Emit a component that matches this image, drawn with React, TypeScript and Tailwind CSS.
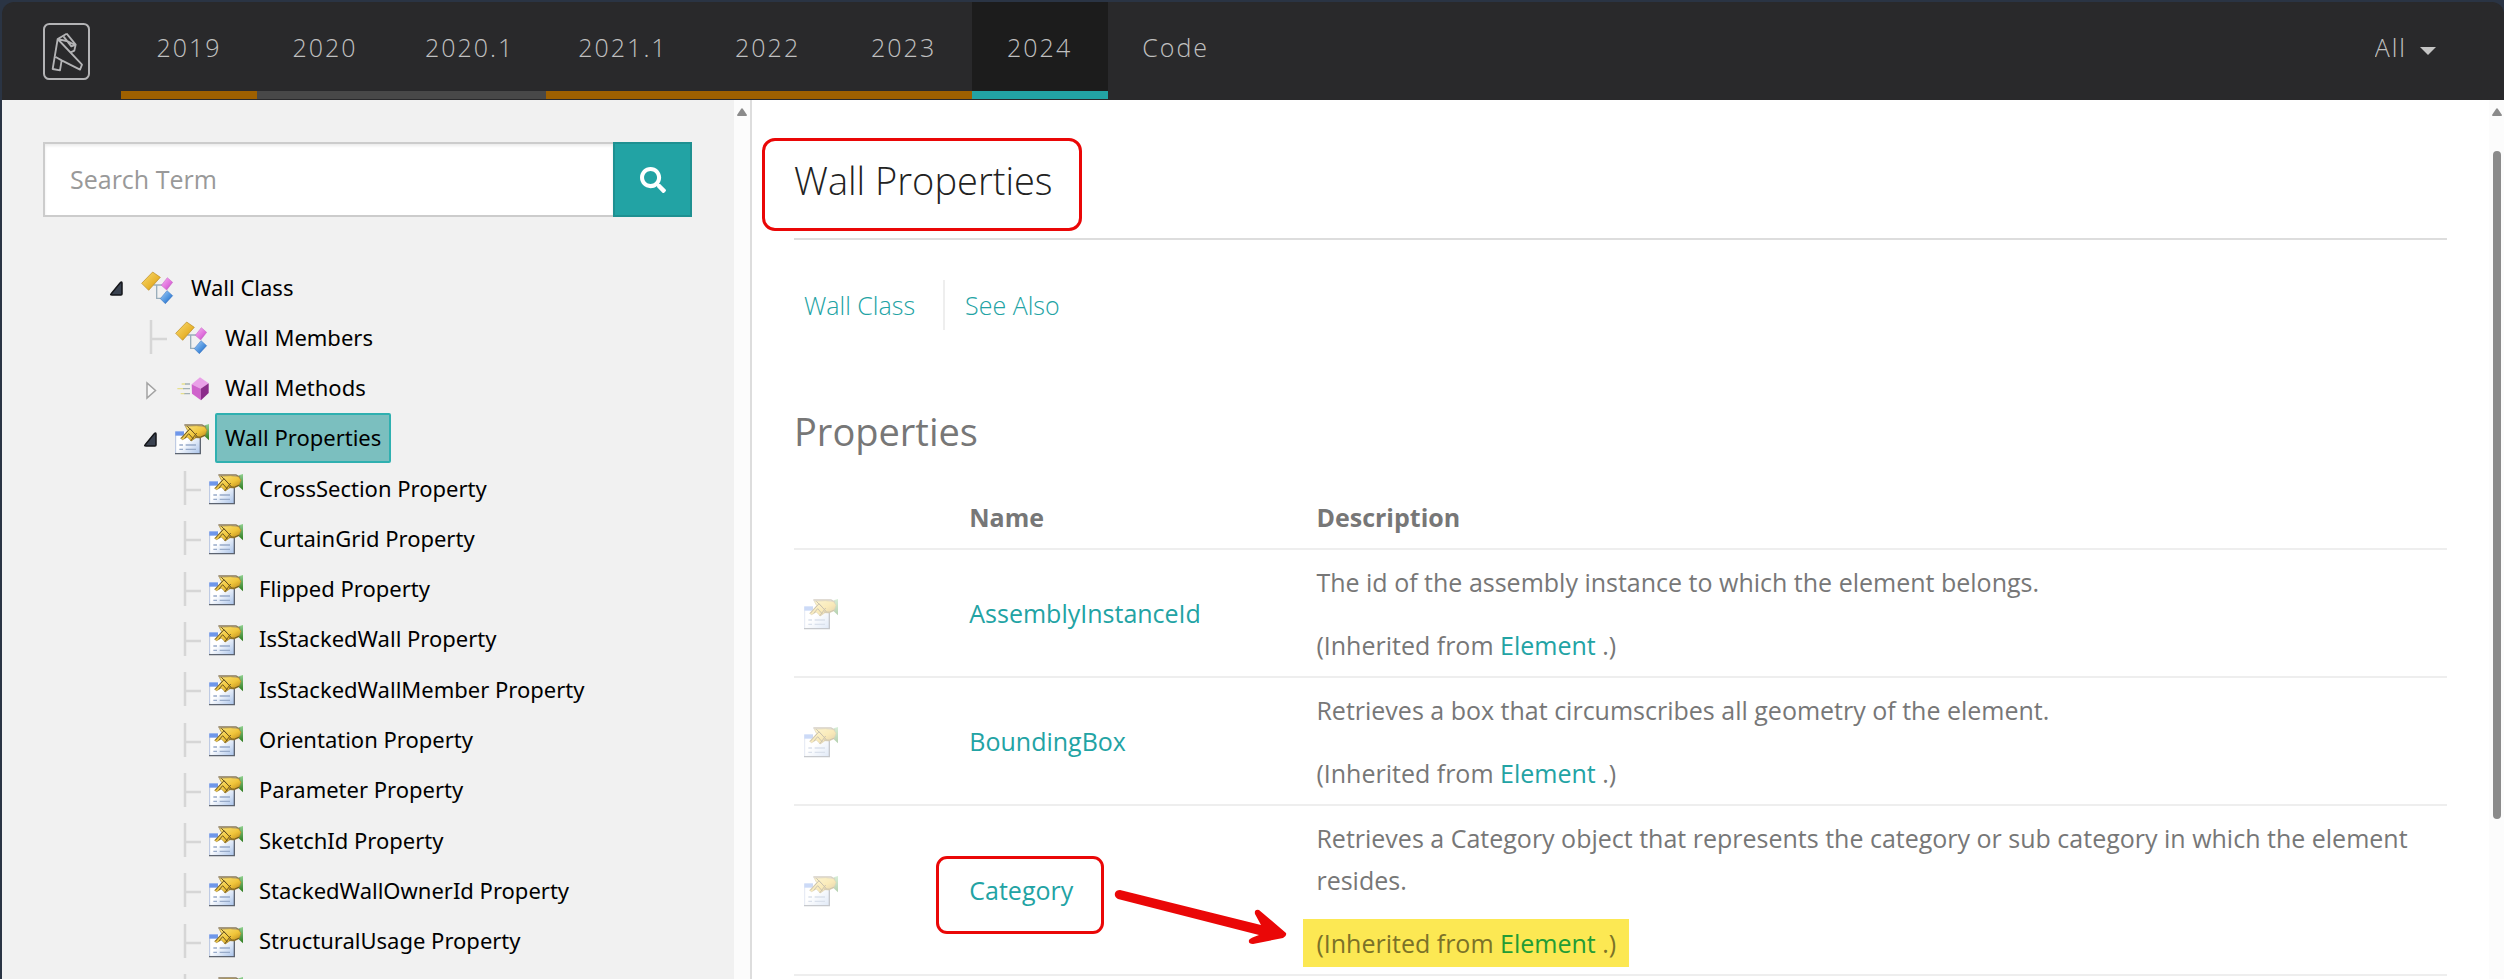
import React from "react";
import { FaSearch } from "react-icons/fa";

type IconKind = "class" | "method" | "property";
type ToggleKind = "open" | "closed" | "leaf";

const versions = [
  { label: "2019", bar: "border-[#9e6000]" },
  { label: "2020", bar: "border-[#484848]" },
  { label: "2020.1", bar: "border-[#484848]" },
  { label: "2021.1", bar: "border-[#9e6000]" },
  { label: "2022", bar: "border-[#9e6000]" },
  { label: "2023", bar: "border-[#9e6000]" },
  { label: "2024", bar: "border-[#22a3a4] bg-[#1c1c1c]" },
  { label: "Code", bar: "border-transparent" },
];

const treeRows: { label: string; level: number; icon: IconKind; toggle: ToggleKind; selected?: boolean }[] = [
  { label: "Wall Class", level: 0, icon: "class", toggle: "open" },
  { label: "Wall Members", level: 1, icon: "class", toggle: "leaf" },
  { label: "Wall Methods", level: 1, icon: "method", toggle: "closed" },
  { label: "Wall Properties", level: 1, icon: "property", toggle: "open", selected: true },
  { label: "CrossSection Property", level: 2, icon: "property", toggle: "leaf" },
  { label: "CurtainGrid Property", level: 2, icon: "property", toggle: "leaf" },
  { label: "Flipped Property", level: 2, icon: "property", toggle: "leaf" },
  { label: "IsStackedWall Property", level: 2, icon: "property", toggle: "leaf" },
  { label: "IsStackedWallMember Property", level: 2, icon: "property", toggle: "leaf" },
  { label: "Orientation Property", level: 2, icon: "property", toggle: "leaf" },
  { label: "Parameter Property", level: 2, icon: "property", toggle: "leaf" },
  { label: "SketchId Property", level: 2, icon: "property", toggle: "leaf" },
  { label: "StackedWallOwnerId Property", level: 2, icon: "property", toggle: "leaf" },
  { label: "StructuralUsage Property", level: 2, icon: "property", toggle: "leaf" },
  { label: "", level: 2, icon: "property", toggle: "leaf" },
];

const indents = ["pl-[107px]", "pl-[141px]", "pl-[175px]"];

const members = [
  { name: "AssemblyInstanceId", text: "The id of the assembly instance to which the element belongs." },
  { name: "BoundingBox", text: "Retrieves a box that circumscribes all geometry of the element." },
  {
    name: "Category",
    text: "Retrieves a Category object that represents the category or sub category in which the element resides.",
    marked: true,
  },
];

function Logo() {
  return (
    <svg className="h-[57px] w-[47px]" viewBox="70 38 141 171" fill="none" stroke="#b3b3b5" strokeLinejoin="round" aria-hidden="true">
      <rect x="73" y="41" width="135" height="165" rx="16" strokeWidth="6" />
      <path
        strokeWidth="5.5"
        d="M141 70 L114 86 L99 176 L121 180 L126 150 L181 178 L187 163 L114 86 M108 140 L126 150 M141 70 L168 103 L164 121 L153 126 M114 86 L144 93 L166 104 M132 79 L155 108 L167 104"
      />
    </svg>
  );
}

function ClassIcon() {
  return (
    <svg className="h-[34px] w-[34px]" viewBox="185 61 102 102" aria-hidden="true">
      <defs>
        <linearGradient id="gold" x1="0" y1="0" x2="1" y2="1">
          <stop offset="0" stopColor="#f9dd75" />
          <stop offset="0.6" stopColor="#e9b52f" />
          <stop offset="1" stopColor="#a97508" />
        </linearGradient>
        <linearGradient id="pink" x1="0" y1="0" x2="1" y2="1">
          <stop offset="0" stopColor="#f6b4f2" />
          <stop offset="0.6" stopColor="#e06fdc" />
          <stop offset="1" stopColor="#a83fa8" />
        </linearGradient>
        <linearGradient id="blue" x1="0" y1="0" x2="1" y2="1">
          <stop offset="0" stopColor="#a9d2fa" />
          <stop offset="0.6" stopColor="#4a90dd" />
          <stop offset="1" stopColor="#1c52a8" />
        </linearGradient>
      </defs>
      <path d="M222 106 H250 M232 106 V146 H248" fill="none" stroke="#9aaebb" strokeWidth="4" />
      <path d="M220 67 L243 83 L208 122 L187 101 Z" fill="url(#gold)" stroke="#b98a1c" strokeWidth="2" />
      <path d="M264 84 L280 98 L262 121 L246 107 Z" fill="url(#pink)" stroke="#c65cc4" strokeWidth="1.5" />
      <path d="M263 123 L280 138 L258 162 L243 147 Z" fill="url(#blue)" stroke="#2f6fc0" strokeWidth="1.5" />
    </svg>
  );
}

function MethodIcon() {
  return (
    <svg className="h-[34px] w-[34px]" viewBox="286 362 102 102" aria-hidden="true">
      <path d="M306 401 H318 M293 415 H312 M303 430 H316" stroke="#e6df8e" strokeWidth="4" />
      <path d="M316 401 H331 M310 415 H331 M314 430 H331" stroke="#a3b0b4" strokeWidth="4" />
      <path d="M361 381 L387 399 L363 415 L336 402 Z" fill="#eaa0e8" />
      <path d="M336 402 L363 415 L364 450 L337 430 Z" fill="#cf62cb" />
      <path d="M387 399 L387 428 L364 450 L363 415 Z" fill="#8b2c8a" />
    </svg>
  );
}

function PropertyIcon() {
  return (
    <svg className="h-[34px] w-[34px] shrink-0" viewBox="285 514 102 102" aria-hidden="true">
      <defs>
        <linearGradient id="sheet" x1="0" y1="0" x2="1" y2="1">
          <stop offset="0.45" stopColor="#ffffff" />
          <stop offset="1" stopColor="#a9c3ea" />
        </linearGradient>
        <linearGradient id="hand" x1="0" y1="0" x2="1" y2="1">
          <stop offset="0" stopColor="#fbe98a" />
          <stop offset="0.55" stopColor="#f0c53a" />
          <stop offset="1" stopColor="#a87510" />
        </linearGradient>
        <linearGradient id="sleeve" x1="0" y1="0" x2="0" y2="1">
          <stop offset="0" stopColor="#8fd08f" />
          <stop offset="1" stopColor="#2c7a1c" />
        </linearGradient>
      </defs>
      <rect x="286" y="546" width="74" height="65" fill="url(#sheet)" />
      <path d="M287 546 V611" stroke="#b4c2de" strokeWidth="3" />
      <path d="M285 612 H361 V560" fill="none" stroke="#5d6470" strokeWidth="4" />
      <rect x="286" y="545" width="26" height="13" fill="#6f97ea" />
      <path d="M298 586 H309 M298 599 H309 M317 586 H348 M317 599 H348" stroke="#98abc9" strokeWidth="4" />
      <path d="M374 527 L387 523 V572 L374 560 Z" fill="url(#sleeve)" />
      <path d="M313 526 H366 L378 533" fill="none" stroke="#8a7b5c" strokeWidth="4" />
      <path
        d="M302 566 L323 543 L316 530 L350 528 L374 531 L381 542 L375 558 L360 565 L348 564 L334 574 L322 562 L308 570 Z"
        fill="url(#hand)"
        stroke="#a68a3a"
        strokeWidth="2"
      />
      <path d="M304 566 L330 537 L352 561 M314 566 L326 552 L340 568 M322 530 L340 548 M332 574 L350 550 M345 562 Q362 566 376 556" fill="none" stroke="#6b5420" strokeWidth="3" />
    </svg>
  );
}

function Toggle({ kind }: { kind: ToggleKind }) {
  return (
    <svg className="h-[34px] w-[32px] shrink-0" viewBox="0 0 32 34" aria-hidden="true">
      {kind === "open" && <path d="M13 13 V24 Q13 25 12 25 H3 Q1 25 2 24 L11 13 Q13 11 13 13 Z" fill="#3a4250" stroke="#15161a" strokeWidth="1.5" />}
      {kind === "closed" && <path d="M4 12 V27 L12.500 19.500 Z" fill="#f8f8f8" stroke="#a3a3a3" strokeWidth="1.500" />}
      {kind === "leaf" && <path d="M8 0 V34 M8 19 H24" fill="none" stroke="#d6d6d6" strokeWidth="2.500" />}
    </svg>
  );
}

function ScrollArrow() {
  return (
    <svg className="mt-2 h-2 w-2.5" viewBox="0 0 10 8" aria-hidden="true">
      <path d="M4.200 0.700 Q5 0 5.800 0.700 L10 7 Q10 8 9 8 H1 Q0 8 0 7 Z" fill="#8b8b8b" />
    </svg>
  );
}

function Annotation() {
  return (
    <>
      <span className="pointer-events-none absolute -top-[13px] -right-[31px] -bottom-[23px] -left-[33px] rounded-[11px] border-3 border-[#ea0707]" />
      <svg className="pointer-events-none absolute top-[36px] left-[144px] h-[44px] w-[176px]" viewBox="1114 905 176 44" overflow="visible" aria-hidden="true">
        <path
          d="M1121 890 L1262 925 L1256 914 Q1255 909 1260 910 L1287 933 Q1288 936 1284 938 L1254 944 Q1249 944 1250 940 Q1251 938 1260 935 L1119 899 Q1115 897 1116 893 Q1117 890 1121 890 Z"
          fill="#ea0707"
        />
      </svg>
    </>
  );
}

export default function App() {
  return (
    <div className="h-screen overflow-hidden bg-[#2a3444] pt-0.5 pl-0.5 font-['Open_Sans',sans-serif]">
      <div className="flex h-full flex-col">
        <header className="flex h-[98px] shrink-0 items-stretch rounded-t-xl bg-[#29292b] pb-px pl-[41px] text-[25px] font-light tracking-[2px] text-[#c0c0c0]">
          <a href="#home" aria-label="Home" className="mt-[21px] mr-[31px]">
            <Logo />
          </a>
          <nav className="flex">
            {versions.map((v) => (
              <a
                key={v.label}
                href={"#" + v.label}
                className={"flex min-w-[136px] items-center justify-center border-b-8 px-8 " + v.bar}
              >
                <span className="leading-[34px]">{v.label}</span>
              </a>
            ))}
          </nav>
          <label className="mr-[68px] ml-auto flex items-center gap-[13px] pb-2">
            <select aria-label="Scope" className="appearance-none bg-transparent leading-[34px] tracking-[2px] outline-none [field-sizing:content]">
              <option>All</option>
            </select>
            <svg className="mt-2 h-2 w-4" viewBox="0 0 16 8" aria-hidden="true">
              <path d="M0 0 H16 L8 8 Z" fill="#c4c4c4" />
            </svg>
          </label>
        </header>

        <div className="flex min-h-0 flex-1">
          <aside className="flex w-[750px] shrink-0 border-r-2 border-[#dddddd] bg-[#f1f1f1]">
            <div className="min-w-0 flex-1 overflow-hidden">
              <form className="mt-[42px] mr-[42px] ml-[41px] flex h-[75px]" onSubmit={(e) => e.preventDefault()}>
                <input
                  type="text"
                  aria-label="Search Term"
                  placeholder="Search Term"
                  className="min-w-0 flex-1 border-2 border-r-0 border-[#cccccc] bg-white px-[25px] text-[25px] shadow-[inset_0_2px_3px_rgba(0,0,0,0.08)] outline-none placeholder:text-[#999999]"
                />
                <button type="submit" aria-label="Search" className="flex w-[79px] items-center justify-center border-2 border-[#1e9091] bg-[#22a3a4] text-white">
                  <FaSearch className="h-[26px] w-[26px]" />
                </button>
              </form>
              <ul className="mt-[45px] grid h-[754px] auto-rows-fr font-['Noto_Sans',sans-serif] text-[22px] text-black">
                {treeRows.map((row, index) => (
                  <li key={index} className={"flex items-center " + indents[row.level]}>
                    <Toggle kind={row.toggle} />
                    {row.icon === "class" && <ClassIcon />}
                    {row.icon === "method" && <MethodIcon />}
                    {row.icon === "property" && <PropertyIcon />}
                    {row.label && (
                      <a
                        href={"#" + row.label}
                        className={
                          "ml-1.5 flex h-full items-center rounded-xs border-2 px-2 whitespace-nowrap " +
                          (row.selected ? "border-[#2fb0b0] bg-[#7bbfbf]" : "border-transparent")
                        }
                      >
                        {row.label}
                      </a>
                    )}
                  </li>
                ))}
              </ul>
            </div>
            <div className="flex w-4 shrink-0 justify-center bg-[#fcfcfc]">
              <ScrollArrow />
            </div>
          </aside>

          <main className="flex min-w-0 flex-1 bg-white">
            <div className="min-w-0 flex-1 overflow-hidden px-[42px] text-[25px] leading-[42px] text-[#777777]">
              <div className="border-b-2 border-[#dddddd] pt-[58px] pb-[36px]">
                <h1 className="relative w-fit text-[38px] leading-[44px] font-light text-[#222222]">
                  Wall Properties
                  <span className="pointer-events-none absolute -top-5 -right-[29px] -bottom-[29px] -left-8 rounded-[13px] border-3 border-[#ea0707]" />
                </h1>
              </div>
              <nav className="mt-10 flex h-[50px] items-center font-light text-[#22a3a4]">
                <a href="#class" className="flex h-full items-center border-r-2 border-[#eeeeee] pr-7 pl-2.5">
                  Wall Class
                </a>
                <a href="#see-also" className="pl-5">
                  See Also
                </a>
              </nav>
              <h2 className="mt-[79px] text-[38px] leading-[44px]">Properties</h2>
              <table className="mt-[33px] w-full table-fixed border-separate border-spacing-0 text-left">
                <colgroup>
                  <col className="w-[10%]" />
                  <col className="w-[21%]" />
                  <col />
                </colgroup>
                <thead>
                  <tr>
                    <th className="border-b-2 border-[#eeeeee] p-2.5" aria-label="Icon" />
                    <th className="border-b-2 border-[#eeeeee] p-2.5 font-bold">Name</th>
                    <th className="border-b-2 border-[#eeeeee] p-2.5 font-bold">Description</th>
                  </tr>
                </thead>
                <tbody>
                  {members.map((m) => (
                    <tr key={m.name}>
                      <td className="border-b-2 border-[#eeeeee] px-2.5 align-middle">
                        <div className="opacity-35">
                          <PropertyIcon />
                        </div>
                      </td>
                      <td className="border-b-2 border-[#eeeeee] px-2.5 align-middle">
                        <div className="relative w-fit">
                          <a href={"#" + m.name} className="text-[#22a3a4]">
                            {m.name}
                          </a>
                          {m.marked && <Annotation />}
                        </div>
                      </td>
                      <td className="border-b-2 border-[#eeeeee] px-2.5 pt-[11px] pb-2.5">
                        <p>{m.text}</p>
                        <p
                          className={
                            m.marked
                              ? "-mx-[13px] mt-[18px] -mb-[3px] w-fit bg-[#fce853] px-[13px] py-[3px] text-[#7b7228]"
                              : "mt-[21px]"
                          }
                        >
                          (Inherited from{" "}
                          <a href="#element" className={m.marked ? "text-[#229c35]" : "text-[#22a3a4]"}>
                            Element
                          </a>{" "}
                          .)
                        </p>
                      </td>
                    </tr>
                  ))}
                </tbody>
              </table>
            </div>
            <div className="flex w-[15px] shrink-0 flex-col items-center bg-[#fcfcfc]">
              <ScrollArrow />
              <div className="mt-[35px] h-[76%] w-2 rounded-full bg-[#8b8b8b]" />
            </div>
          </main>
        </div>
      </div>
    </div>
  );
}
